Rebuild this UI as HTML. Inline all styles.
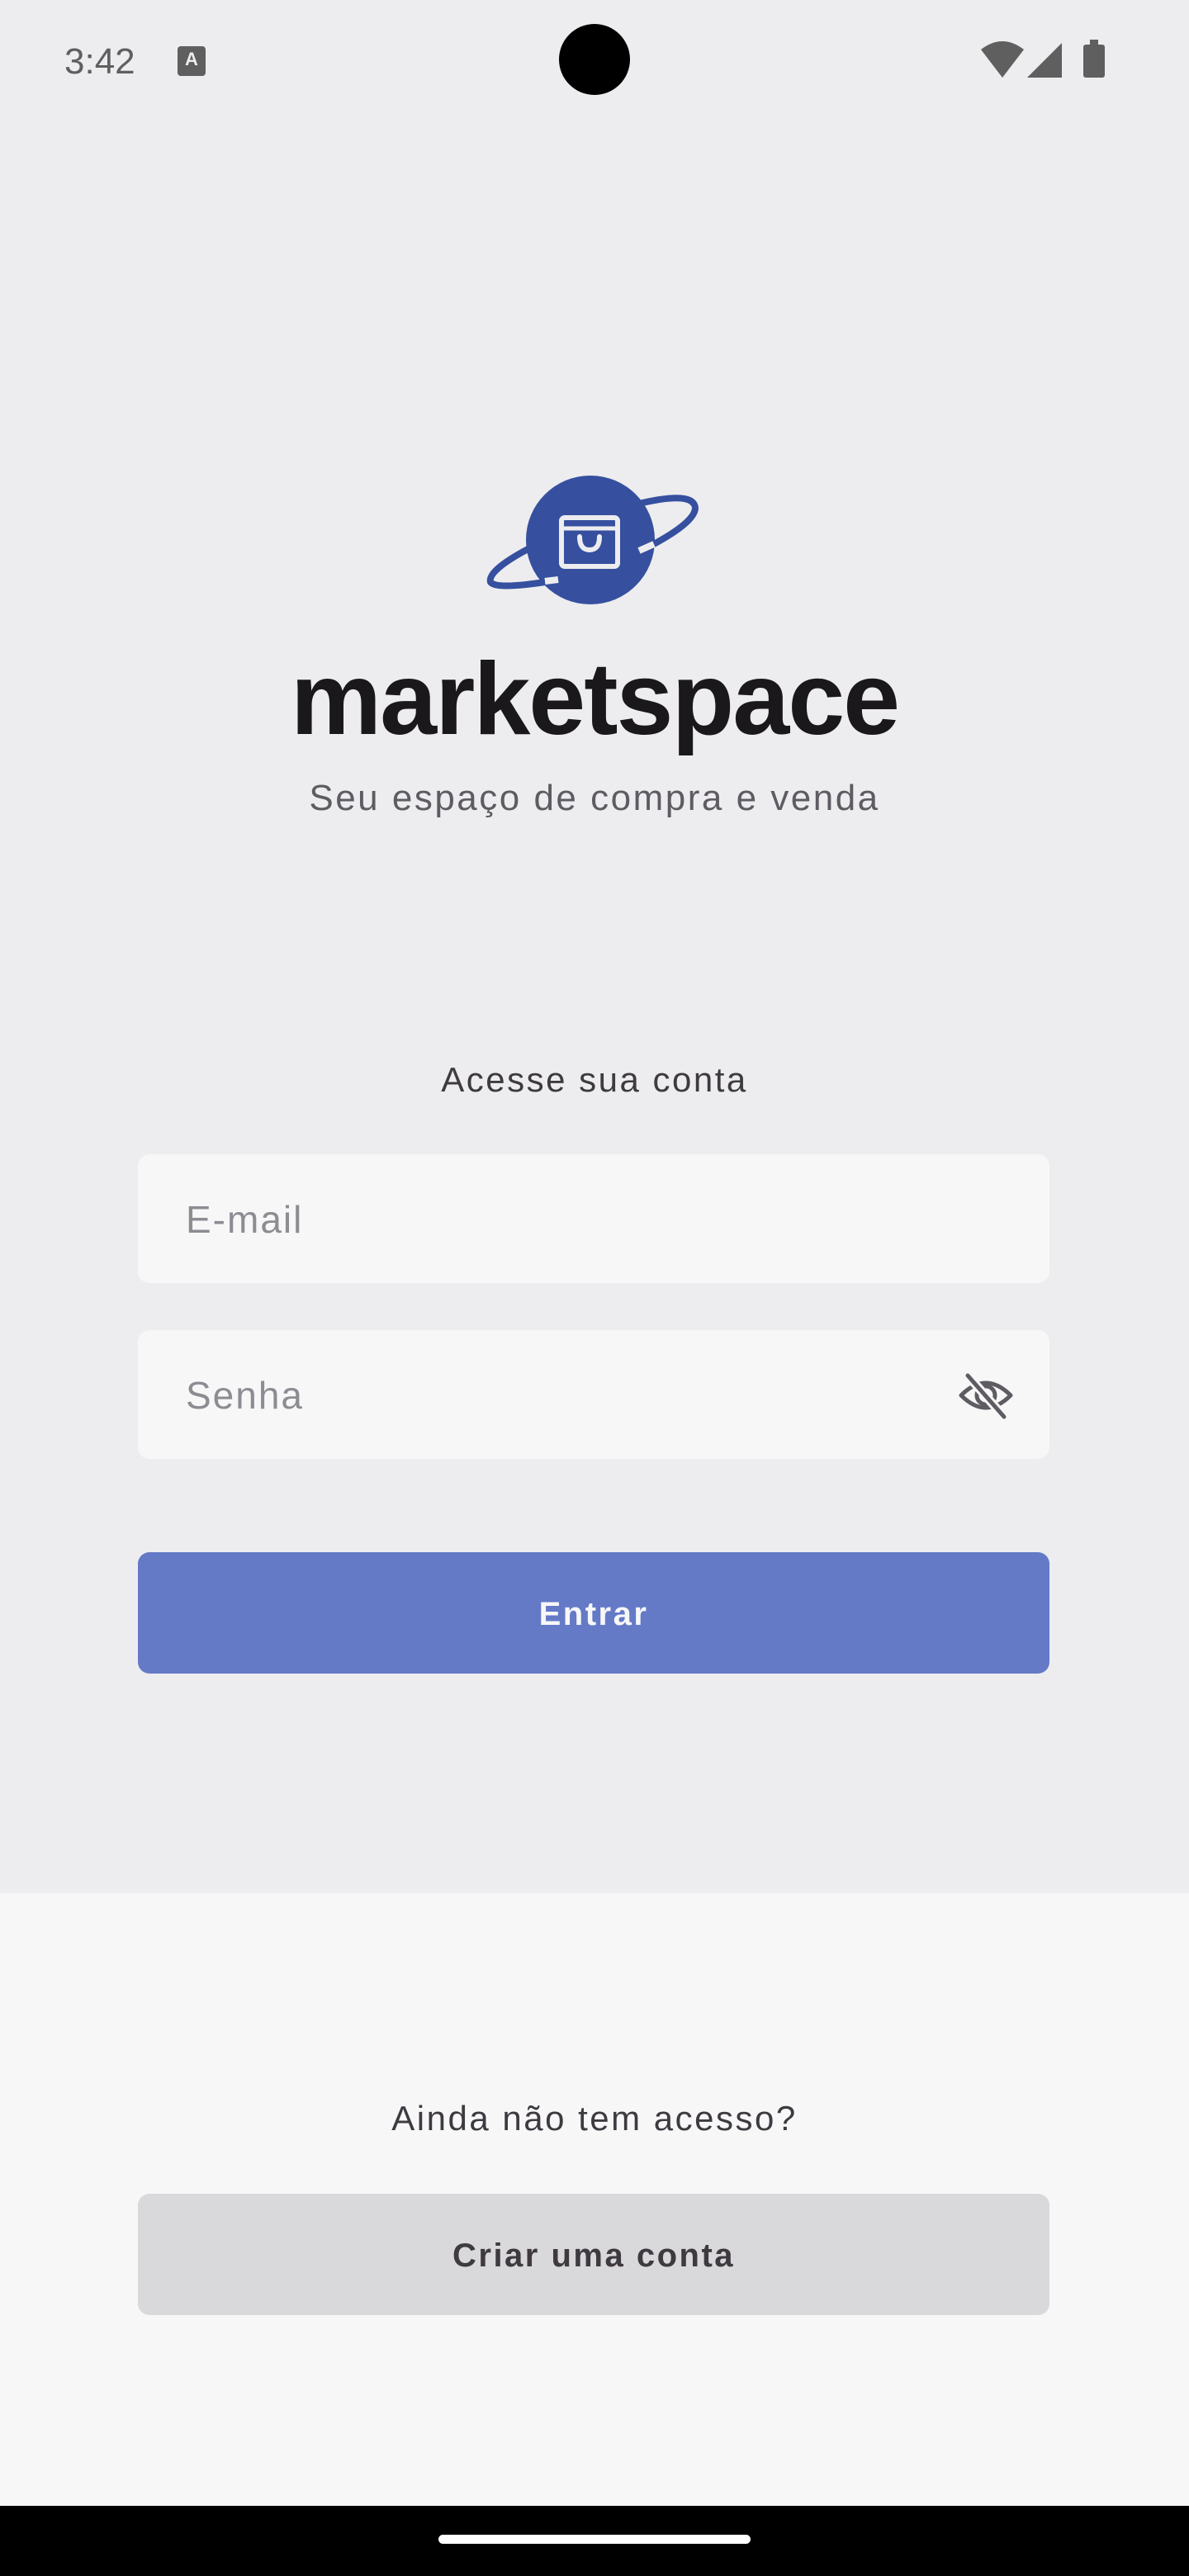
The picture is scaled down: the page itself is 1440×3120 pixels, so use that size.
<!DOCTYPE html>
<html><head><meta charset="utf-8"><style>
*{margin:0;padding:0;box-sizing:border-box}
body{width:1440px;height:3120px;background:#ededef;font-family:"Liberation Sans",sans-serif;position:relative;overflow:hidden}
.abs{position:absolute}
.c{left:0;width:1440px;text-align:center}
.inp{left:167px;width:1104px;height:156px;background:#f7f7f8;border-radius:14px;font-size:46px;color:#8e8c92;padding-left:58px;line-height:158px;letter-spacing:2px}
.btn{left:167px;width:1104px;height:147px;border-radius:14px;text-align:center;line-height:150px;font-size:40px;font-weight:bold;letter-spacing:2.5px}
</style></head><body>
<div class="abs" style="left:78px;top:50px;font-size:44px;color:#5f5f5f">3:42</div>
<div class="abs" style="left:215px;top:56px;width:34px;height:36px;background:#5f5f5f;border-radius:4px;color:#ededef;font-size:22px;font-weight:bold;text-align:center;line-height:32px">A</div>
<div class="abs" style="left:677px;top:29px;width:86px;height:86px;border-radius:50%;background:#000"></div>
<svg class="abs" style="left:1186px;top:48px" width="160" height="48" viewBox="0 0 160 48">
<path d="M2 12 Q28 -8 54 12 L28 46 Z" fill="#5f5f5f"/>
<path d="M58 46 L100 4 L100 46 Z" fill="#5f5f5f"/>
<rect x="126" y="6" width="26" height="40" rx="3" fill="#5f5f5f"/><rect x="134" y="0" width="10" height="8" fill="#5f5f5f"/>
</svg>
<svg class="abs" style="left:580px;top:570px" width="280" height="170" viewBox="580 570 280 170">
<circle cx="715" cy="654" r="78" fill="#36509f"/>
<path d="M778 609 Q840 595 842 615 Q842 632 790 660" fill="none" stroke="#36509f" stroke-width="8" stroke-linecap="round"/>
<path d="M649 660 Q590 690 594 705 Q600 714 660 705" fill="none" stroke="#36509f" stroke-width="8"/>
<path d="M774 667 L792 659" stroke="#ededef" stroke-width="8"/>
<path d="M660 704 L676 702" stroke="#ededef" stroke-width="8"/>
<rect x="680" y="627" width="68" height="59" rx="4" fill="none" stroke="#ededef" stroke-width="6"/>
<path d="M680 640 H748" stroke="#ededef" stroke-width="5"/>
<path d="M702 650 Q702 666 714 666 Q726 666 726 650" fill="none" stroke="#ededef" stroke-width="6" stroke-linecap="round"/>
</svg>
<div class="abs c" style="top:776px;font-size:124px;font-weight:bold;color:#1a181b;letter-spacing:-2px">marketspace</div>
<div class="abs c" style="top:942px;font-size:44px;color:#5f5b62;letter-spacing:2.5px">Seu espaço de compra e venda</div>
<div class="abs c" style="top:1284px;font-size:42px;color:#3e3a40;letter-spacing:2.5px">Acesse sua conta</div>
<div class="abs inp" style="top:1398px">E-mail</div>
<div class="abs inp" style="top:1611px">Senha</div>
<svg class="abs" style="left:1158px;top:1660px" width="72" height="60" viewBox="0 0 72 60">
<path d="M6 30 Q36 0 66 30 Q36 60 6 30 Z" fill="none" stroke="#5f5b62" stroke-width="5" stroke-linejoin="round"/>
<circle cx="36" cy="30" r="11" fill="none" stroke="#5f5b62" stroke-width="5"/>
<path d="M14 6 L58 56" stroke="#f7f7f8" stroke-width="11"/>
<path d="M14 6 L58 56" stroke="#5f5b62" stroke-width="5" stroke-linecap="round"/>
</svg>
<div class="abs btn" style="top:1880px;background:#647ac7;color:#f7f7f8">Entrar</div>
<div class="abs" style="left:0;top:2293px;width:1440px;height:742px;background:#f7f7f8"></div>
<div class="abs c" style="top:2542px;font-size:42px;color:#3e3a40;letter-spacing:2.5px">Ainda não tem acesso?</div>
<div class="abs btn" style="top:2657px;background:#d9d8da;color:#3e3a40">Criar uma conta</div>
<div class="abs" style="left:0;top:3035px;width:1440px;height:85px;background:#000"></div>
<div class="abs" style="left:531px;top:3070px;width:378px;height:11px;border-radius:6px;background:#fff"></div>
</body></html>
